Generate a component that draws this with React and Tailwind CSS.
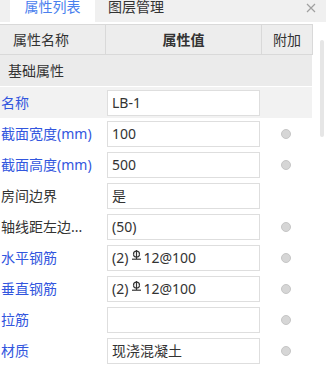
import React from 'react';

const rows = [
    { label: '名称', value: 'LB-1', blue: true, dot: false, active: true },
    { label: '截面宽度(mm)', value: '100', blue: true, dot: true },
    { label: '截面高度(mm)', value: '500', blue: true, dot: true },
    { label: '房间边界', value: '是', blue: false, dot: false },
    { label: '轴线距左边...', value: '(50)', blue: false, dot: true },
    { label: '水平钢筋', value: 'bar', blue: true, dot: true },
    { label: '垂直钢筋', value: 'bar', blue: true, dot: true },
    { label: '拉筋', value: '', blue: true, dot: true },
    { label: '材质', value: '现浇混凝土', blue: true, dot: true },
];

// HRB400 rebar symbol
const Rebar = () => (
    <svg width="11" height="10" viewBox="0 0 11 10" className="ml-[3px] mr-[1px] -mt-[5px]">
        <path d="M2.5 4.2 A3 3 0 0 1 8.5 4.2" fill="none" stroke="#333" strokeWidth="1.2" />
        <path d="M2.5 4.2 Q2.5 7 5.5 7 Q8.5 7 8.5 4.2" fill="none" stroke="#333" strokeWidth="1.2" />
        <line x1="5.5" y1="0" x2="5.5" y2="9" stroke="#333" strokeWidth="1.2" />
        <line x1="1" y1="9.2" x2="10" y2="9.2" stroke="#333" strokeWidth="1.2" />
    </svg>
);

const Row = ({ row }) => (
    <div className={`flex items-center h-[31px] w-[312px] ${row.active ? 'bg-[#f2f2f2]' : 'bg-white'}`}>
        <div className={`w-[107px] pl-[1px] truncate ${row.blue ? 'text-[#3256de]' : 'text-[#333]'}`}>{row.label}</div>
        <div className="w-[153px] h-[26px] bg-white border border-[#dedede] flex items-center pl-[4px] text-[#333]">
            {row.value === 'bar' ? (
                <span className="flex items-center">(2)<Rebar />12@100</span>
            ) : (
                row.value
            )}
        </div>
        <div className="flex-1 flex justify-center">
            {row.dot && <div className="w-[10px] h-[10px] rounded-full bg-[#d6d6d6] border border-[#c6c6c6]" />}
        </div>
    </div>
);

const App = () => {
    return (
        <div
            className="relative w-[326px] h-[366px] bg-white overflow-hidden text-[14px]"
            style={{ fontFamily: '"Noto Sans", "Noto Sans CJK SC", sans-serif' }}
        >
            <div className="h-[22px] bg-[#f0f0f0] flex items-start relative">
                <div className="ml-[10px] w-[85px] h-[22px] bg-white flex justify-center">
                    <span className="leading-[14px] text-[#4a80ee]">属性列表</span>
                </div>
                <span className="ml-[13px] leading-[14px] text-[#333]">图层管理</span>
                <svg width="10" height="10" viewBox="0 0 10 10" className="absolute left-[306px] top-[3px]">
                    <path d="M1 1 L9 9 M9 1 L1 9" stroke="#a0a0a0" strokeWidth="1.2" />
                </svg>
            </div>
            <div className="h-[2px] bg-white" />
            <div className="flex w-[313px] h-[31px] bg-[#ededed] border-y border-r border-[#d9d9d9] text-[#333]">
                <div className="w-[106px] border-r border-[#d9d9d9] flex items-center pl-[13px]">属性名称</div>
                <div className="w-[156px] border-r border-[#d9d9d9] flex items-center justify-center font-bold">属性值</div>
                <div className="flex-1 flex items-center justify-center">附加</div>
            </div>
            <div className="w-[312px] h-[31px] bg-[#ebebeb] flex items-center pl-[8px] text-[#333]">基础属性</div>
            <div className="h-[1px]" />
            {rows.map((r) => (
                <Row key={r.label} row={r} />
            ))}
            <div className="absolute left-[320px] top-[40px] w-[4px] h-[97px] bg-[#e6e6e6] rounded-sm" />
        </div>
    );
};

export default App;
